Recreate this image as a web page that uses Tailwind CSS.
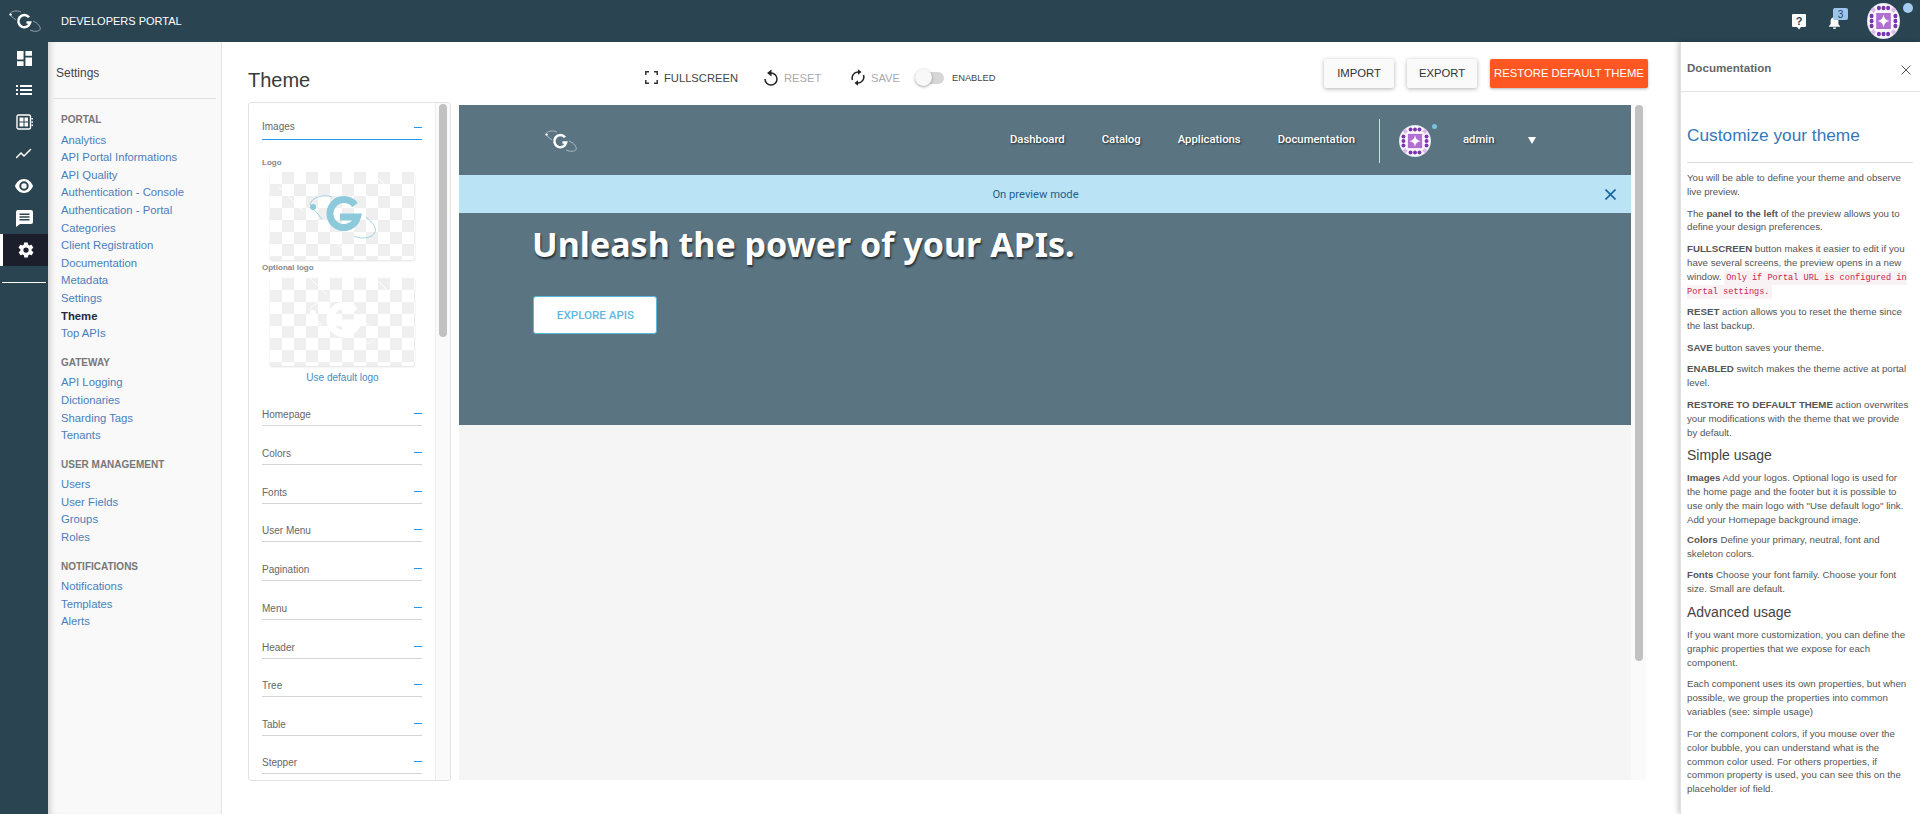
<!DOCTYPE html>
<html lang="en">
<head>
  <meta charset="UTF-8">
  <title>Theme - Developers Portal</title>
  <script src="https://cdn.jsdelivr.net/npm/@tailwindcss/browser@4"></script>
</head>
<body class="h-[814px] overflow-hidden bg-white font-['Liberation_Sans',Arial,sans-serif] text-[11.3px] text-[#555]">
  <svg class="hidden">
    <symbol id="identicon" viewBox="0 0 36 36" preserveAspectRatio="none">
      <circle cx="18" cy="18" r="18" fill="#dfe9f0"/>
      <circle cx="18" cy="18" r="17" fill="#fbf8fd"/>
      <g fill="#dcbcea"><path d="M7 4l3 3-3 3-3-3zM29 4l3 3-3 3-3-3zM7 26l3 3-3 3-3-3zM29 26l3 3-3 3-3-3z"/></g>
      <g fill="#7b35b0"><circle cx="13" cy="5" r="2.200"/><circle cx="18" cy="5" r="2.200"/><circle cx="23" cy="5" r="2.200"/><circle cx="13" cy="31" r="2.200"/><circle cx="18" cy="31" r="2.200"/><circle cx="23" cy="31" r="2.200"/><circle cx="5" cy="13" r="2.200"/><circle cx="5" cy="18" r="2.200"/><circle cx="5" cy="23" r="2.200"/><circle cx="31" cy="13" r="2.200"/><circle cx="31" cy="18" r="2.200"/><circle cx="31" cy="23" r="2.200"/></g>
      <rect x="10" y="10" width="16" height="16" fill="#b070d0"/>
      <path d="M18 11.500Q18.800 17.200 24.500 18 18.800 18.800 18 24.500 17.200 18.800 11.500 18 17.200 17.200 18 11.500z" fill="#fff"/>
    </symbol>
    <symbol id="glogo" viewBox="0 0 34 24">
      <path d="M2 5C3 2 9 1 13 3M3 7l5 4" fill="none" stroke="currentColor" stroke-width=".7" opacity=".7"/>
      <circle cx="2.600" cy="5.600" r="1.200" fill="currentColor"/>
      <path d="M21 8.300A6 6 0 1 0 22.200 13.500H18.500" fill="none" stroke="currentColor" stroke-width="2.500"/>
      <path d="M25 12c5 2 8 6 7 8.500-1 2-6 2.500-10 .5" fill="none" stroke="currentColor" stroke-width=".7" opacity=".7"/>
    </symbol>
    <symbol id="biglogo" viewBox="0 0 145 88" fill="none">
      <path d="M40 33c1-8 14-11 22-8M42 35l10 12" stroke="currentColor" stroke-width=".8"/>
      <circle cx="43" cy="35" r="3" fill="currentColor"/>
      <path d="M85 33A14 14 0 1 0 87.500 45H70" stroke="currentColor" stroke-width="7"/>
      <path d="M96 45c7 5 11 12 9 15-2 6-13 8-21 4" stroke="currentColor" stroke-width=".8"/>
    </symbol>
  </svg>

  <header class="flex h-[42px] items-center bg-[#2a4452] text-white">
    <svg class="ml-[8px] h-[24px] w-[34px]"><use href="#glogo"/></svg>
    <span class="ml-[19px] text-[11px]">DEVELOPERS PORTAL</span>
    <div class="ml-auto flex items-center">
      <svg class="mt-[1px] h-[17px] w-[14px]" viewBox="0 0 14 17"><path d="M1 1h12a1 1 0 0 1 1 1v11a1 1 0 0 1-1 1H9l-2 2.500L5 14H1a1 1 0 0 1-1-1V2a1 1 0 0 1 1-1z" fill="#fff"/><text x="7" y="11.500" font-size="11" font-weight="700" text-anchor="middle" fill="#2a4452">?</text></svg>
      <div class="relative ml-[22px] mt-[1px] h-[15px] w-[16px]">
        <svg class="mt-[1px] h-[14px] w-[13px]" viewBox="0 0 16 18"><path d="M8 1a1.300 1.300 0 0 1 1.300 1.300v.6A5 5 0 0 1 13 8v4l2 2v1H1v-1l2-2V8a5 5 0 0 1 3.700-5.100v-.6A1.300 1.300 0 0 1 8 1zM6 16h4a2 2 0 0 1-4 0z" fill="#fff"/></svg>
        <span class="absolute left-[5px] top-[-6px] flex h-[12px] w-[15px] items-center justify-center rounded-[2px] bg-[#9cc5ec] text-[10px] text-[#2a4452]">3</span>
      </div>
      <div class="relative ml-[23px] mr-[20px] h-[36px] w-[33px]">
        <svg class="block h-[36px] w-[33px]"><use href="#identicon"/></svg>
        <span class="absolute right-[-13px] top-[0px] h-[10px] w-[10px] rounded-full bg-[#a5cdf2]"></span>
      </div>
    </div>
  </header>

  <div class="flex h-[772px]">
    <nav class="relative z-10 w-[48px] shrink-0 bg-[#2a4452] text-white">
      <div class="flex h-[32px] items-center justify-center"><svg class="h-[15px] w-[15px]" viewBox="0 0 16 16" fill="#fff"><path d="M0 0h7v9H0zM9 0h7v5H9zM9 7h7v9H9zM0 11h7v5H0z"/></svg></div>
      <div class="flex h-[32px] items-center justify-center"><svg class="h-[14px] w-[16px]" viewBox="0 0 16 14" fill="#fff"><path d="M0 2h2v2H0zM4 2h12v2H4zM0 6h2v2H0zM4 6h12v2H4zM0 10h2v2H0zM4 10h12v2H4z"/></svg></div>
      <div class="flex h-[32px] items-center justify-center"><svg class="h-[16px] w-[17px]" viewBox="0 0 17 16"><rect x="1" y="1" width="13.500" height="14" rx="1.500" fill="none" stroke="#fff" stroke-width="1.400"/><path d="M3.500 3.500h4v4h-4zM8.500 3.500h3.500v4H8.500zM3.500 8.500h4v4h-4zM8.500 8.500h3.500v4H8.500z" fill="#fff"/><path d="M15.500 4h1.500v1.500h-1.500zM15.500 7.200h1.500v1.500h-1.500zM15.500 10.400h1.500v1.500h-1.500z" fill="#fff"/></svg></div>
      <div class="flex h-[32px] items-center justify-center"><svg class="h-[12px] w-[16px]" viewBox="0 0 16 12" fill="none" stroke="#fff" stroke-width="1.500"><path d="M0 10l5-5 3 3 7-7"/></svg></div>
      <div class="flex h-[32px] items-center justify-center"><svg class="h-[14px] w-[18px]" viewBox="0 0 18 14"><path fill-rule="evenodd" d="M9 0c4 0 7.500 2.800 9 7-1.500 4.200-5 7-9 7S1.500 11.200 0 7c1.500-4.200 5-7 9-7zm0 2.300A4.700 4.700 0 1 0 9 11.700 4.700 4.700 0 0 0 9 2.300zM9 4.300a2.700 2.700 0 1 1 0 5.400 2.700 2.700 0 0 1 0-5.400z" fill="#fff"/></svg></div>
      <div class="flex h-[32px] items-center justify-center"><svg class="h-[17px] w-[17px]" viewBox="0 0 17 17"><path fill-rule="evenodd" d="M2 0h13a2 2 0 0 1 2 2v10a2 2 0 0 1-2 2H4l-4 3V2a2 2 0 0 1 2-2zM3.500 3.500v1.500h10V3.500zM3.500 6.300v1.500h10V6.300zM3.500 9.100v1.500h10V9.100z" fill="#fff"/></svg></div>
      <div class="flex h-[32px] items-center justify-center border-l-[3px] border-white bg-[#1c1e2b]"><svg class="h-[18px] w-[18px]" viewBox="0 0 24 24"><path fill="#fff" d="M19.400 13c0-.3.100-.6.100-1s0-.7-.100-1l2.100-1.600c.2-.1.200-.4.100-.6l-2-3.500c-.1-.2-.4-.3-.6-.2l-2.500 1c-.5-.4-1.100-.7-1.700-1l-.4-2.700c0-.2-.2-.4-.5-.4h-4c-.2 0-.5.200-.5.400l-.4 2.700c-.6.200-1.100.6-1.700 1l-2.500-1c-.2-.1-.5 0-.6.200l-2 3.500c-.1.200-.1.500.1.600L4.600 11c0 .3-.1.700-.1 1s0 .7.100 1l-2.100 1.600c-.2.100-.2.400-.1.600l2 3.500c.1.200.4.300.6.200l2.500-1c.5.400 1.100.7 1.700 1l.4 2.700c0 .2.200.4.500.4h4c.2 0 .5-.2.500-.4l.4-2.700c.6-.2 1.100-.6 1.700-1l2.500 1c.2.100.5 0 .6-.2l2-3.500c.1-.2.100-.5-.1-.6zM12 15.500a3.500 3.500 0 1 1 0-7 3.500 3.500 0 0 1 0 7z"/></svg></div>
      <div class="mx-[2px] mt-[16px] h-px bg-white"></div>
    </nav>

    <aside class="w-[174px] shrink-0 border-r border-[#e3e3e3] bg-[#f9f9f9] px-[5px] shadow-[inset_6px_0_6px_-4px_rgba(0,0,0,0.18)]">
      <div class="flex h-[57px] items-center border-b border-[#e3e3e3] pl-[3px] pt-[6px] text-[12px] text-[#444]">Settings</div>
      <div class="pl-[8px] leading-[17.6px] text-[#4a7ebb]">
        <h3 class="mb-[3px] mt-[12px] text-[10px] font-bold text-[#777]">PORTAL</h3>
        <a class="block">Analytics</a>
        <a class="block">API Portal Informations</a>
        <a class="block">API Quality</a>
        <a class="block">Authentication - Console</a>
        <a class="block">Authentication - Portal</a>
        <a class="block">Categories</a>
        <a class="block">Client Registration</a>
        <a class="block">Documentation</a>
        <a class="block">Metadata</a>
        <a class="block">Settings</a>
        <a class="block font-bold text-[#1f2a44]">Theme</a>
        <a class="block">Top APIs</a>
        <h3 class="mb-[3px] mt-[11px] text-[10px] font-bold text-[#777]">GATEWAY</h3>
        <a class="block">API Logging</a>
        <a class="block">Dictionaries</a>
        <a class="block">Sharding Tags</a>
        <a class="block">Tenants</a>
        <h3 class="mb-[3px] mt-[11px] text-[10px] font-bold text-[#777]">USER MANAGEMENT</h3>
        <a class="block">Users</a>
        <a class="block">User Fields</a>
        <a class="block">Groups</a>
        <a class="block">Roles</a>
        <h3 class="mb-[3px] mt-[11px] text-[10px] font-bold text-[#777]">NOTIFICATIONS</h3>
        <a class="block">Notifications</a>
        <a class="block">Templates</a>
        <a class="block">Alerts</a>
      </div>
    </aside>

    <main class="w-[1458px] shrink-0 pl-[26px]">
      <div class="flex h-[60px] items-start">
        <h1 class="mt-[26px] w-[397px] text-[20px] leading-[24px] text-[#3a3a3a]">Theme</h1>
        <div class="mt-[27px] flex items-center text-[11.2px] leading-[14px]">
          <svg class="h-[13px] w-[13px]" viewBox="0 0 13 13" fill="none" stroke="#333" stroke-width="1.500"><path d="M.8 4V.8H4M9 .8h3.200V4M12.200 9v3.200H9M4 12.200H.8V9"/></svg>
          <span class="ml-[6px] w-[100px] text-[#444]">FULLSCREEN</span>
          <svg class="h-[17px] w-[14px]" viewBox="0 0 14 17" fill="none" stroke="#222" stroke-width="1.500"><path d="M7 4a6 6 0 1 1-6 6"/><path d="M7.500 .5v7L3 4z" fill="#222" stroke="none"/></svg>
          <span class="ml-[6px] w-[67px] text-[#aaa]">RESET</span>
          <svg class="h-[17px] w-[14px]" viewBox="0 0 14 17" fill="none" stroke="#222" stroke-width="1.500"><path d="M1.500 11A6 6 0 0 1 7 3M12.500 6A6 6 0 0 1 7 14"/><path d="M7 .2v5.600L10.500 3zM7 11.200v5.600L3.500 14z" fill="#222" stroke="none"/></svg>
          <span class="ml-[6px] w-[48px] text-[#aaa]">SAVE</span>
          <div class="relative h-[12px] w-[25px] rounded-full bg-[#d6d6d6]">
            <span class="absolute left-[-4px] top-[-3px] h-[17px] w-[17px] rounded-full bg-[#f8f8f8] shadow-[0_1px_3px_rgba(0,0,0,0.35)]"></span>
          </div>
          <span class="ml-[8px] text-[9.3px] text-[#444]">ENABLED</span>
        </div>
        <div class="ml-auto mr-[32px] mt-[17px] flex text-[11.3px]">
          <button class="h-[29px] w-[70px] rounded-[2px] bg-[#fafafa] text-[#333] shadow-[0_1px_4px_rgba(0,0,0,0.3)]">IMPORT</button>
          <button class="ml-[13px] h-[29px] w-[70px] rounded-[2px] bg-[#fafafa] text-[#333] shadow-[0_1px_4px_rgba(0,0,0,0.3)]">EXPORT</button>
          <button class="ml-[13px] h-[29px] w-[158px] whitespace-nowrap rounded-[2px] bg-[#ff5722] text-white shadow-[0_1px_3px_rgba(0,0,0,0.3)]">RESTORE DEFAULT THEME</button>
        </div>
      </div>

      <div class="flex h-[680px] items-start">
        <section class="relative h-[679px] w-[203px] shrink-0 overflow-hidden rounded-[3px] border border-[#e2e2e2] bg-white">
          <div class="absolute inset-y-0 right-0 w-[15px] border-l border-[#eee] bg-[#fafafa]">
            <div class="ml-[3px] mt-[1px] h-[233px] w-[8px] rounded-full bg-[#c1c1c1]"></div>
          </div>
          <div class="w-[187px] pl-[13px] text-[10px] text-[#666]">
            <div class="flex h-[37px] w-[160px] items-end justify-between border-b border-[#2196f3] pb-[5px]"><span>Images</span><span class="mb-[6px] h-px w-[8px] bg-[#2196f3]"></span></div>
            <p class="mt-[18px] text-[8px] font-bold leading-[10px] text-[#888]">Logo</p>
            <div class="relative ml-[8px] mt-[4px] h-[88px] w-[145px] overflow-hidden rounded-[3px] bg-white bg-[conic-gradient(#efefef_25%,#fff_0_50%,#efefef_0_75%,#fff_0)] bg-[length:24px_24px] shadow-[0_1px_2px_rgba(0,0,0,0.12)]">
              <svg class="absolute inset-0 h-[88px] w-[145px]" viewBox="0 0 145 88" fill="none"><path d="M9 15l24 24M36 12l16 16M85 12l30 30M105 3l10 10M4 80l14-14M68 72l12 12" stroke="#fff"/></svg>
              <svg class="absolute inset-0 h-[88px] w-[145px] text-[#8ccadb]"><use href="#biglogo"/></svg>
            </div>
            <p class="mt-[2px] text-[8px] font-bold leading-[12px] text-[#888]">Optional logo</p>
            <div class="relative ml-[8px] mt-[4px] h-[88px] w-[145px] overflow-hidden rounded-[3px] bg-white bg-[conic-gradient(#efefef_25%,#fff_0_50%,#efefef_0_75%,#fff_0)] bg-[length:24px_24px] shadow-[0_1px_2px_rgba(0,0,0,0.12)]">
              <svg class="absolute inset-0 h-[88px] w-[145px]" viewBox="0 0 145 88" fill="none"><path d="M40 0l16 16M105 0l14 14M43 40l10 10" stroke="#fff"/></svg>
              <svg class="absolute inset-0 h-[88px] w-[145px] text-white"><use href="#biglogo"/></svg>
            </div>
            <p class="ml-[8px] mt-[6px] w-[145px] text-center text-[10px] leading-[12px] text-[#4a8ac4]">Use default logo</p>
            <div class="mt-[23px] flex h-[19px] w-[160px] items-start justify-between border-b border-[#d5d5d5]"><span>Homepage</span><span class="mt-[6px] h-px w-[8px] bg-[#2196f3]"></span></div>
            <div class="mt-[20px] flex h-[19px] w-[160px] items-start justify-between border-b border-[#d5d5d5]"><span>Colors</span><span class="mt-[6px] h-px w-[8px] bg-[#2196f3]"></span></div>
            <div class="mt-[20px] flex h-[19px] w-[160px] items-start justify-between border-b border-[#d5d5d5]"><span>Fonts</span><span class="mt-[6px] h-px w-[8px] bg-[#2196f3]"></span></div>
            <div class="mt-[19px] flex h-[19px] w-[160px] items-start justify-between border-b border-[#d5d5d5]"><span>User Menu</span><span class="mt-[6px] h-px w-[8px] bg-[#2196f3]"></span></div>
            <div class="mt-[20px] flex h-[19px] w-[160px] items-start justify-between border-b border-[#d5d5d5]"><span>Pagination</span><span class="mt-[6px] h-px w-[8px] bg-[#2196f3]"></span></div>
            <div class="mt-[20px] flex h-[19px] w-[160px] items-start justify-between border-b border-[#d5d5d5]"><span>Menu</span><span class="mt-[6px] h-px w-[8px] bg-[#2196f3]"></span></div>
            <div class="mt-[20px] flex h-[19px] w-[160px] items-start justify-between border-b border-[#d5d5d5]"><span>Header</span><span class="mt-[6px] h-px w-[8px] bg-[#2196f3]"></span></div>
            <div class="mt-[19px] flex h-[19px] w-[160px] items-start justify-between border-b border-[#d5d5d5]"><span>Tree</span><span class="mt-[6px] h-px w-[8px] bg-[#2196f3]"></span></div>
            <div class="mt-[20px] flex h-[19px] w-[160px] items-start justify-between border-b border-[#d5d5d5]"><span>Table</span><span class="mt-[6px] h-px w-[8px] bg-[#2196f3]"></span></div>
            <div class="mt-[19px] flex h-[19px] w-[160px] items-start justify-between border-b border-[#d5d5d5]"><span>Stepper</span><span class="mt-[6px] h-px w-[8px] bg-[#2196f3]"></span></div>
          </div>
        </section>

        <section class="ml-[8px] mt-[3px] h-[675px] w-[1172px] shrink-0 bg-[#f5f5f5]">
          <div class="h-[320px] bg-[#5a7482] text-white">
            <div class="flex h-[70px] items-center pt-[1px] font-['Roboto',sans-serif] text-[11.3px] font-medium [text-shadow:1px_1px_2px_rgba(0,0,0,0.6)]">
              <svg class="ml-[85px] h-[24px] w-[34px]"><use href="#glogo"/></svg>
              <span class="ml-[432px]">Dashboard</span>
              <span class="ml-[37px]">Catalog</span>
              <span class="ml-[37px]">Applications</span>
              <span class="ml-[37px]">Documentation</span>
              <span class="ml-[24px] h-[44px] w-px bg-[#d8d8d8]"></span>
              <div class="relative ml-[19px] h-[32px] w-[32px]">
                <svg class="block h-[32px] w-[32px]"><use href="#identicon"/></svg>
                <span class="absolute right-[-6px] top-[-1px] h-[5px] w-[5px] rounded-full bg-[#7cc4dc]"></span>
              </div>
              <span class="ml-[32px]">admin</span>
              <span class="ml-[33px] h-0 w-0 border-x-[4.500px] border-t-[7px] border-x-transparent border-t-white"></span>
            </div>
            <div class="relative flex h-[38px] items-center justify-center bg-[#bae3f6] pr-[19px] pt-[2px] font-['Roboto',sans-serif] text-[11.2px] text-[#1f5d8c]">
              On preview mode
              <svg class="absolute right-[15px] top-[14px] h-[11px] w-[11px]" viewBox="0 0 11 11" stroke="#1565a0" stroke-width="1.600"><path d="M.5.5l10 10M10.500.5l-10 10"/></svg>
            </div>
            <h2 class="ml-[73px] mt-[9px] font-['Noto_Sans',sans-serif] text-[34px] font-bold leading-[44px] [text-shadow:1px_2px_2px_rgba(0,0,0,0.6)]">Unleash the power of your APIs.</h2>
            <button class="ml-[74px] mt-[30px] block h-[38px] w-[124px] rounded-[3px] border border-[#5eb8de] bg-white pl-[1px] pt-[1px] font-['Roboto',sans-serif] text-[11.6px] font-medium text-[#5eb8de]">EXPLORE APIS</button>
          </div>
        </section>
        <div class="mt-[3px] h-[675px] w-[15px] shrink-0 bg-[#fafafa] pl-[4px]">
          <div class="h-[556px] w-[8px] rounded-full bg-[#c1c1c1]"></div>
        </div>
      </div>
    </main>

    <aside class="relative w-[240px] shrink-0 border-l border-[#e0e0e0] shadow-[-2px_0_5px_rgba(0,0,0,0.2)]">
      <div class="flex h-[50px] items-center justify-between border-b border-[#e4e4e4] pl-[6px] pr-[9px] pt-[2px]">
        <span class="text-[11.6px] font-bold text-[#666]">Documentation</span>
        <svg class="mt-[5px] h-[10px] w-[10px]" viewBox="0 0 10 10" stroke="#555"><path d="M.5.5l9 9M9.500.5l-9 9"/></svg>
      </div>
      <div class="pl-[6px] pr-[11px] text-[9.7px] leading-[13.9px] text-[#555]">
        <h2 class="mr-[-4px] mt-[31px] border-b border-[#ddd] pb-[15px] text-[17.3px] leading-[24px] text-[#3378b8]">Customize your theme</h2>
        <p class="mb-[7.700px] mt-[8px]">You will be able to define your theme and observe live preview.</p>
        <p class="mb-[7.700px]">The <b>panel to the left</b> of the preview allows you to define your design preferences.</p>
        <p class="mb-[7.700px]"><b>FULLSCREEN</b> button makes it easier to edit if you have several screens, the preview opens in a new window. <code class="rounded-[2px] bg-[#f9f2f4] px-[2px] py-[2px] font-['Liberation_Mono',monospace] text-[8.6px] leading-[10px] text-[#c7254e]">Only if Portal URL is configured in Portal settings.</code></p>
        <p class="mb-[7.700px]"><b>RESET</b> action allows you to reset the theme since the last backup.</p>
        <p class="mb-[7.700px]"><b>SAVE</b> button saves your theme.</p>
        <p class="mb-[7.700px]"><b>ENABLED</b> switch makes the theme active at portal level.</p>
        <p class="mb-[7.700px]"><b>RESTORE TO DEFAULT THEME</b> action overwrites your modifications with the theme that we provide by default.</p>
        <h3 class="mb-[7px] mt-[-1px] text-[14px] leading-[18px] text-[#444]">Simple usage</h3>
        <p class="mb-[6px]"><b>Images</b> Add your logos. Optional logo is used for the home page and the footer but it is possible to use only the main logo with "Use default logo" link. Add your Homepage background image.</p>
        <p class="mb-[7.700px]"><b>Colors</b> Define your primary, neutral, font and skeleton colors.</p>
        <p class="mb-[7.700px]"><b>Fonts</b> Choose your font family. Choose your font size. Small are default.</p>
        <h3 class="mb-[7px] mt-[-1px] text-[14px] leading-[18px] text-[#444]">Advanced usage</h3>
        <p class="mb-[7.700px]">If you want more customization, you can define the graphic properties that we expose for each component.</p>
        <p class="mb-[7.700px]">Each component uses its own properties, but when possible, we group the properties into common variables (see: simple usage)</p>
        <p>For the component colors, if you mouse over the color bubble, you can understand what is the common color used. For others properties, if common property is used, you can see this on the placeholder iof field.</p>
      </div>
    </aside>
  </div>
</body>
</html>
